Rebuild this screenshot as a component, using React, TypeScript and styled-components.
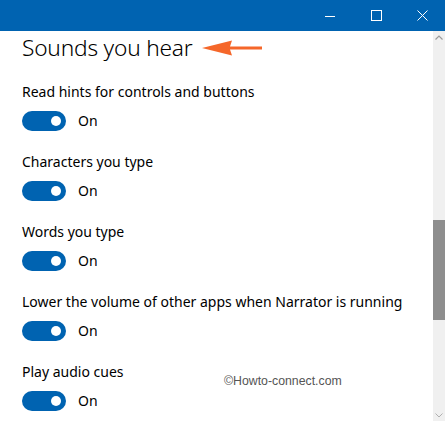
import React from 'react'
import styled, {createGlobalStyle} from 'styled-components'

const GlobalStyle = createGlobalStyle`
  html, body {
    margin: 0;
    padding: 0;
    background: #ffffff;
  }
  body {
    font-family: 'Noto Sans', 'Open Sans', sans-serif;
    color: #000;
  }
`

const Window = styled.div`
  width: 445px;
  height: 421px;
  display: flex;
  flex-direction: column;
  overflow: hidden;
  position: relative;
`

const TitleBar = styled.div`
  height: 31px;
  background: #0063b1;
  display: flex;
  justify-content: flex-end;
  align-items: stretch;
  flex-shrink: 0;
`

const CaptionButton = styled.div`
  width: 46px;
  display: flex;
  align-items: center;
  justify-content: center;
`

const Body = styled.div`
  flex: 1;
  display: flex;
  min-height: 0;
`

const Content = styled.div`
  flex: 1;
  padding: 2px 0 0 22px;
  display: flex;
  flex-direction: column;
`

const TitleRow = styled.div`
  display: flex;
  align-items: center;
  gap: 9px;
  height: 30px;
  flex-shrink: 0;
  margin-bottom: 19px;
`

const Title = styled.h2`
  margin: 0;
  font-weight: 300;
  font-size: 22.7px;
  line-height: 30px;
  letter-spacing: -0.2px;
`

const Setting = styled.div`
  display: flex;
  flex-direction: column;
  height: 70px;
  flex-shrink: 0;
`

const Label = styled.div`
  font-size: 14px;
  line-height: 20px;
`

const ToggleRow = styled.div`
  display: flex;
  align-items: center;
  gap: 12px;
  margin-top: 9px;
`

const Track = styled.div<{$on: boolean}>`
  width: 44px;
  height: 20px;
  border-radius: 10px;
  background: ${(p) => (p.$on ? '#0063b1' : '#fff')};
  position: relative;
  box-sizing: border-box;
`

const Knob = styled.span`
  position: absolute;
  top: 5px;
  right: 5px;
  width: 10px;
  height: 10px;
  border-radius: 50%;
  background: #fff;
`

const State = styled.span`
  font-size: 14px;
  line-height: 20px;
`

const Scrollbar = styled.div`
  width: 12px;
  background: #f0f0f0;
  display: flex;
  flex-direction: column;
  align-items: center;
`

const ScrollArrow = styled.div`
  height: 12px;
  display: flex;
  align-items: center;
  justify-content: center;
`

const ScrollTrack = styled.div`
  flex: 1;
  width: 100%;
  display: flex;
  flex-direction: column;
  padding-top: 177px;
`

const Thumb = styled.div`
  height: 100px;
  width: 100%;
  background: #8e8e8e;
`

const Watermark = styled.div`
  position: absolute;
  left: 224px;
  top: 374px;
  font-family: 'Liberation Sans', Arial, sans-serif;
  font-size: 12.3px;
  color: #555;
`

const settings = [
  'Read hints for controls and buttons',
  'Characters you type',
  'Words you type',
  'Lower the volume of other apps when Narrator is running',
  'Play audio cues',
]

const App = () => {
  return (
    <Window>
      <GlobalStyle />
      <TitleBar>
        <CaptionButton>
          <svg width="10" height="10" viewBox="0 0 10 10">
            <path d="M0 5.5h10" stroke="#fff" strokeWidth="1" />
          </svg>
        </CaptionButton>
        <CaptionButton>
          <svg width="11" height="11" viewBox="0 0 11 11">
            <rect x="0.5" y="0.5" width="10" height="10" fill="none" stroke="#fff" strokeWidth="1" />
          </svg>
        </CaptionButton>
        <CaptionButton>
          <svg width="11" height="11" viewBox="0 0 11 11">
            <path d="M0.5 0.5l10 10M10.5 0.5l-10 10" stroke="#fff" strokeWidth="1" />
          </svg>
        </CaptionButton>
      </TitleBar>
      <Body>
        <Content>
          <TitleRow>
            <Title>Sounds you hear</Title>
            <svg width="62" height="18" viewBox="0 0 62 18">
              <path d="M0 9 L30 1.5 L28 7.5 L60 7.5 L60 10.5 L28 10.5 L30 16.5 Z" fill="#f5672a" />
            </svg>
          </TitleRow>
          {settings.map((s) => (
            <Setting key={s}>
              <Label>{s}</Label>
              <ToggleRow>
                <Track $on>
                  <Knob />
                </Track>
                <State>On</State>
              </ToggleRow>
            </Setting>
          ))}
        </Content>
        <Scrollbar>
          <ScrollArrow>
            <svg width="8" height="5" viewBox="0 0 8 5">
              <path d="M0.5 4.5L4 1l3.5 3.5" fill="none" stroke="#9a9a9a" strokeWidth="1.2" />
            </svg>
          </ScrollArrow>
          <ScrollTrack>
            <Thumb />
          </ScrollTrack>
          <ScrollArrow>
            <svg width="8" height="5" viewBox="0 0 8 5">
              <path d="M0.5 0.5L4 4l3.5-3.5" fill="none" stroke="#b0b0b0" strokeWidth="1" />
            </svg>
          </ScrollArrow>
        </Scrollbar>
      </Body>
      <Watermark>©Howto-connect.com</Watermark>
    </Window>
  )
}

export default App
